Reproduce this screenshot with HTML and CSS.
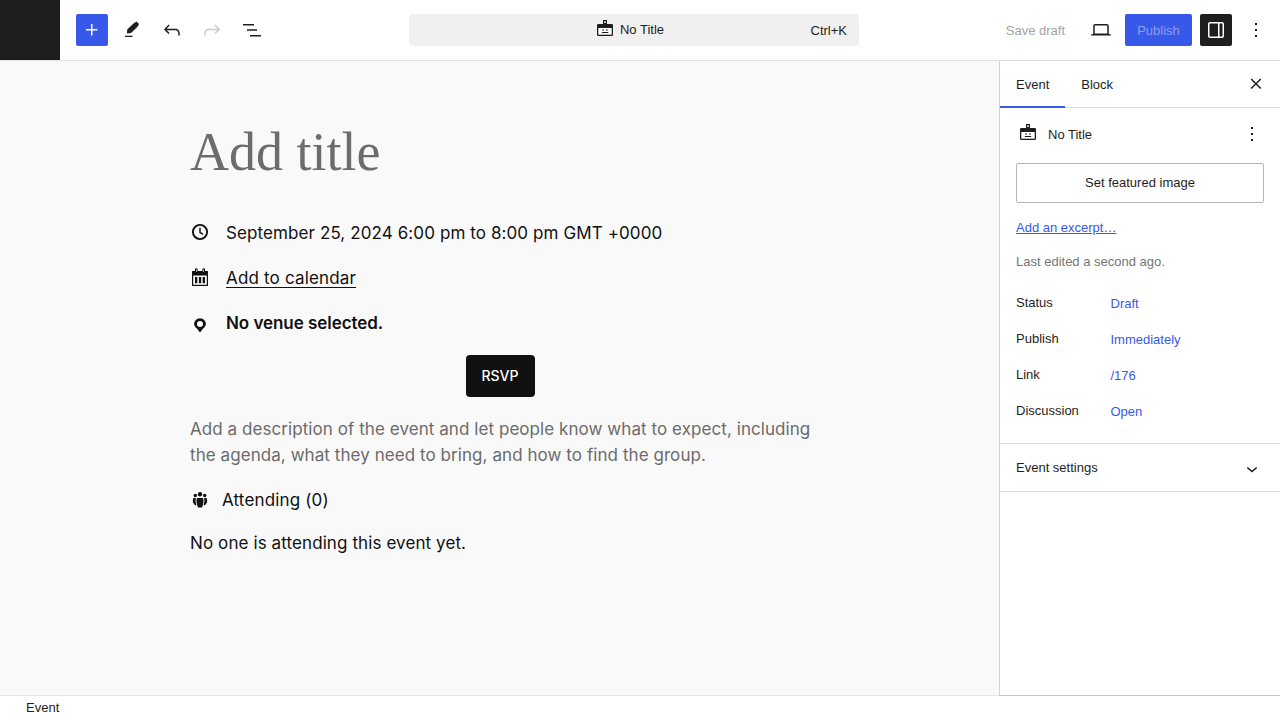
FILE: index.html
```html
<!DOCTYPE html>
<html>
<head>
    <title>No Title</title>
    <link rel="stylesheet" href="styles.css">
</head>
<body>
<div class="editor">
    <header class="topbar">
        <div class="site-logo"></div>
        <div class="tools">
            <button class="tool tool-add">
                <svg width="24" height="24" viewBox="0 0 24 24"><path d="M11 12.500V17.500H12.500V12.500H17.500V11H12.500V6H11V11H6V12.500H11Z" fill="#fff"/></svg>
            </button>
            <button class="tool">
                <svg width="24" height="24" viewBox="0 0 24 24"><path d="M7.200 11.500 13.500 5.400 16.500 3.600 19 6.100 17.300 9 11 15.100 7 15.600Z" fill="#1e1e1e"/><path d="M5 17.700h7.500v1.300H5z" fill="#1e1e1e"/></svg>
            </button>
            <button class="tool">
                <svg width="24" height="24" viewBox="0 0 24 24"><path d="M18.300 11.700c-.6-.6-1.400-.9-2.300-.9H6.700l2.900-3.300-1.100-1-4.500 5L8.500 16l1-1-2.700-2.700H16c.5 0 .9.2 1.300.5 1 1 1 3.400 1 4.500v.3h1.500v-.2c0-1.500 0-4.300-1.500-5.700z" fill="#1e1e1e"/></svg>
            </button>
            <button class="tool">
                <svg width="24" height="24" viewBox="0 0 24 24"><path d="M15.600 6.500l-1.100 1 2.900 3.300H8c-.9 0-1.700.3-2.300.9-1.400 1.500-1.400 4.200-1.400 5.600v.2h1.500v-.3c0-1.100 0-3.500 1-4.500.3-.3.7-.5 1.300-.5h9.200L14.500 15l1.100 1.100 4.600-4.600-4.600-5z" fill="#ccc"/></svg>
            </button>
            <button class="tool">
                <svg width="24" height="24" viewBox="0 0 24 24"><path d="M3 6h11v1.500H3zM7 11.300h10v1.500H7zM10 17h11v1.500H10z" fill="#1e1e1e"/></svg>
            </button>
        </div>
        <div class="command-wrap">
            <div class="command">
                <div class="command-title">
                    <svg width="24" height="24" viewBox="0 0 24 24"><use href="#icon-event"/></svg>
                    <span>No Title</span>
                </div>
                <span class="command-key">Ctrl+K</span>
            </div>
        </div>
        <div class="actions">
            <span class="save-draft">Save draft</span>
            <button class="tool">
                <svg width="24" height="24" viewBox="0 0 24 24"><path d="M20.500 16h-.7V8c0-1.100-.9-2-2-2H6.200c-1.100 0-2 .9-2 2v8h-.7c-.8 0-1.500.7-1.500 1.500h20c0-.8-.7-1.500-1.500-1.500zM5.700 8c0-.3.2-.5.5-.5h11.600c.3 0 .5.2.5.5v7.600H5.700V8z" fill="#1e1e1e"/></svg>
            </button>
            <button class="publish">Publish</button>
            <button class="tool tool-dark">
                <svg width="24" height="24" viewBox="0 0 24 24"><path d="M18 4H6c-1.100 0-2 .9-2 2v12c0 1.100.9 2 2 2h12c1.100 0 2-.9 2-2V6c0-1.100-.9-2-2-2zM5.500 18V6c0-.3.2-.5.5-.5h8v13H6c-.3 0-.5-.2-.5-.5zm13 0c0 .3-.2.5-.5.5h-2.500v-13H18c.3 0 .5.2.5.5v12z" fill="#fff"/></svg>
            </button>
            <button class="tool tool-more">
                <svg width="24" height="24" viewBox="0 0 24 24"><use href="#icon-dots"/></svg>
            </button>
        </div>
    </header>

    <div class="main">
        <main class="canvas">
            <div class="post">
                <h1 class="post-title">Add title</h1>
                <div class="meta-row meta-date">
                    <svg class="meta-icon" width="20" height="20" viewBox="0 0 20 20"><circle cx="10" cy="10" r="7.100" fill="none" stroke="#111" stroke-width="1.900"/><path d="M10 5.800V10.400L13 12.400" fill="none" stroke="#111" stroke-width="1.500"/></svg>
                    <span>September 25, 2024 6:00 pm to 8:00 pm GMT +0000</span>
                </div>
                <div class="meta-row meta-calendar">
                    <svg class="meta-icon" width="20" height="20" viewBox="0 0 20 20"><path d="M2 4h16v15H2z" fill="#111"/><path d="M3.200 8.500h13.600V17.800H3.200z" fill="#f9f9f9"/><path d="M5 10h2.300v6.300H5zM8.900 10h2.300v6.300H8.900zM12.700 10h2.300v6.300h-2.300z" fill="#111"/><path d="M5.500 5V1.800h1.600V5M12.900 5V1.800h1.600V5" fill="#f9f9f9" stroke="#111" stroke-width="1"/></svg>
                    <a class="calendar-link">Add to calendar</a>
                </div>
                <div class="meta-row meta-venue">
                    <svg class="meta-icon" width="20" height="20" viewBox="0 0 20 20"><path d="M10 19.500 7.300 16.100A5.800 5.800 0 1 1 12.700 16.100Z" fill="#111"/><circle cx="10" cy="11" r="3" fill="#f9f9f9"/></svg>
                    <strong>No venue selected.</strong>
                </div>
                <div class="rsvp-row"><button class="rsvp">RSVP</button></div>
                <p class="description">Add a description of the event and let people know what to expect, including the agenda, what they need to bring, and how to find the group.</p>
                <div class="attending">
                    <svg width="20" height="20" viewBox="0 0 20 20" fill="#111"><circle cx="10" cy="4.200" r="2.200"/><circle cx="5.300" cy="5.500" r="1.700"/><circle cx="14.700" cy="5.500" r="1.700"/><path d="M7 8h6c.9 2.500.5 6-1 9.500H8C6.500 14 6.100 10.500 7 8Z"/><path d="M3.500 8h2.400c-.6 2.300-.3 4.700.5 7.200H5L3 12.500c-.4-1.500-.2-3.200.5-4.500Z"/><path d="M16.500 8h-2.400c.6 2.300.3 4.700-.5 7.200H15l2-2.700c.4-1.500.2-3.200-.5-4.500Z"/></svg>
                    <span>Attending (0)</span>
                </div>
                <p class="no-attendees">No one is attending this event yet.</p>
            </div>
        </main>

        <aside class="sidebar">
            <div class="tabs">
                <div class="tab tab-active">Event</div>
                <div class="tab">Block</div>
                <button class="tabs-close">
                    <svg width="24" height="24" viewBox="0 0 24 24"><path d="M13 11.800l4.300-4.300-1.100-1.100-4.200 4.300-4.300-4.300-1.100 1.100 4.300 4.300-4.300 4.200 1.100 1.100 4.300-4.300 4.200 4.300 1.100-1.100z" fill="#1e1e1e"/></svg>
                </button>
            </div>
            <div class="panel">
                <div class="doc-row">
                    <svg class="doc-icon" width="24" height="24" viewBox="0 0 24 24"><use href="#icon-event"/></svg>
                    <span class="doc-name">No Title</span>
                    <svg class="doc-menu" width="24" height="24" viewBox="0 0 24 24"><use href="#icon-dots"/></svg>
                </div>
                <button class="featured">Set featured image</button>
                <a class="excerpt">Add an excerpt…</a>
                <p class="edited">Last edited a second ago.</p>
                <div class="summary">
                    <div class="summary-row"><span>Status</span><a>Draft</a></div>
                    <div class="summary-row"><span>Publish</span><a>Immediately</a></div>
                    <div class="summary-row"><span>Link</span><a>/176</a></div>
                    <div class="summary-row"><span>Discussion</span><a>Open</a></div>
                </div>
            </div>
            <div class="settings-row">
                <span>Event settings</span>
                <svg width="24" height="24" viewBox="0 0 24 24"><path d="M17.200 12 16.200 11 12 14.600 7.800 11 6.800 12l5.200 4.600z" fill="#1e1e1e"/></svg>
            </div>
        </aside>
    </div>

    <footer class="statusbar">Event</footer>
</div>

<svg class="icon-defs" width="0" height="0">
    <symbol id="icon-event" viewBox="0 0 24 24">
        <path d="M5.300 7h13.400c.7 0 1.300.6 1.300 1.300v9.400c0 .7-.6 1.300-1.300 1.300H5.300c-.7 0-1.300-.6-1.300-1.300V8.300C4 7.600 4.600 7 5.300 7z" fill="#1e1e1e"/>
        <path d="M5.300 11h13.400v6.700H5.300z" fill="#fff"/>
        <path d="M10 3h4v4.500h-4z" fill="#1e1e1e"/>
        <path d="M11.200 4.200h1.600v1.800h-1.600z" fill="#fff"/>
        <path d="M9.500 12.200h1.200v1.500H9.500zM13.300 12.200h1.200v1.500h-1.200zM8.800 15h6.400v1H8.800z" fill="#1e1e1e"/>
    </symbol>
    <symbol id="icon-dots" viewBox="0 0 24 24">
        <path d="M13 19h-2v-2h2v2zm0-6h-2v-2h2v2zm0-6h-2V5h2v2z" fill="#1e1e1e"/>
    </symbol>
</svg>
</body>
</html>
```

FILE: styles.css
```css
* {
    box-sizing: border-box;
}

html, body {
    margin: 0;
    height: 100%;
    overflow: hidden;
}

body {
    font-family: "Liberation Sans", sans-serif;
    font-size: 13px;
    color: #1e1e1e;
    background: #fff;
}

button {
    font-family: inherit;
    border: 0;
    padding: 0;
    background: none;
}

svg {
    display: block;
}

.icon-defs {
    position: absolute;
}

.editor {
    display: flex;
    flex-direction: column;
    height: 720px;
}

/* top bar */
.topbar {
    display: flex;
    align-items: center;
    height: 61px;
    flex: none;
    border-bottom: 1px solid #e0e0e0;
}

.site-logo {
    width: 60px;
    height: 60px;
    background: #1e1e1e;
}

.tools {
    display: flex;
    align-items: center;
    gap: 8px;
    margin-left: 16px;
}

.tool {
    display: flex;
    align-items: center;
    justify-content: center;
    width: 32px;
    height: 32px;
    border-radius: 2px;
}

.tool-add {
    background: #3858e9;
}

.tool-dark {
    background: #1e1e1e;
}

.tool-more {
    margin-left: 8px;
}

.command-wrap {
    position: absolute;
    left: 409px;
    top: 14px;
}

.command {
    position: relative;
    display: flex;
    align-items: center;
    justify-content: center;
    width: 450px;
    height: 32px;
    background: #f0f0f0;
    border-radius: 4px;
}

.command-title {
    display: flex;
    align-items: center;
    gap: 3px;
    margin-top: -2px;
    margin-left: -11px;
}

.command-key {
    position: absolute;
    right: 12px;
    top: 9px;
}

.actions {
    display: flex;
    align-items: center;
    margin-left: auto;
    margin-right: 8px;
}

.save-draft {
    color: #a2a2a2;
    margin-right: 20px;
}

.publish {
    width: 67px;
    height: 32px;
    margin-left: 8px;
    margin-right: 8px;
    background: #3858e9;
    color: #8a9ef2;
    font-size: 13px;
    border-radius: 2px;
}

/* editor canvas */
.main {
    display: flex;
    height: 635px;
    flex: none;
}

.canvas {
    flex: 1;
    background: #f9f9f9;
    border-bottom: 1px solid #e6e6e6;
}

.post {
    width: 620px;
    margin-left: 190px;
    font-family: Inter, sans-serif;
    font-optical-sizing: none;
    font-size: 17px;
    letter-spacing: 0.1px;
    color: #111;
}

.post-title {
    margin: 0;
    padding-top: 56px;
    height: 143px;
    font-family: "Liberation Serif", serif;
    font-size: 54px;
    font-weight: 400;
    letter-spacing: 0;
    line-height: 70px;
    color: #6c6c6c;
}

.meta-row {
    display: flex;
    align-items: center;
    gap: 16px;
    height: 28px;
}

.meta-row span,
.calendar-link {
    margin-top: 1px;
}

.meta-icon {
    flex: none;
}

.meta-date {
    margin-top: 14px;
}

.meta-calendar {
    margin-top: 17px;
}

.meta-venue {
    margin-top: 18px;
}

.meta-venue strong {
    margin-top: -1px;
    font-weight: 600;
    letter-spacing: -0.05px;
}

.calendar-link {
    letter-spacing: 0.17px;
    text-decoration: underline;
    text-underline-offset: 3px;
}

.rsvp-row {
    display: flex;
    justify-content: center;
    margin-top: 18px;
}

.rsvp {
    width: 69px;
    height: 42px;
    padding-bottom: 1px;
    background: #111;
    color: #fff;
    font-family: Inter, sans-serif;
    font-size: 14px;
    font-weight: 500;
    border-radius: 4px;
}

.description {
    width: 630px;
    margin: 19px 0 0;
    line-height: 26px;
    letter-spacing: 0.065px;
    color: #6b6b6b;
}

.attending {
    display: flex;
    align-items: center;
    gap: 12px;
    height: 28px;
    margin-top: 18px;
    letter-spacing: 0.15px;
}

.no-attendees {
    margin: 15px 0 0;
    line-height: 28px;
}

/* sidebar */
.sidebar {
    width: 281px;
    flex: none;
    background: #fff;
    border-left: 1px solid #d4d4d4;
    border-bottom: 1px solid #c4c4c4;
}

.tabs {
    display: flex;
    align-items: center;
    height: 47px;
    border-bottom: 1px solid #e0e0e0;
}

.tab {
    display: flex;
    align-items: center;
    height: 47px;
    padding: 0 16px;
}

.tab-active {
    box-shadow: inset 0 -2px 0 #3858e9;
}

.tabs-close {
    margin-left: auto;
    margin-right: 12px;
}

.panel {
    padding: 0 16px;
    height: 336px;
    border-bottom: 1px solid #e0e0e0;
}

.doc-row {
    display: flex;
    align-items: center;
    height: 52px;
    margin-bottom: 3px;
}

.doc-icon {
    margin-top: -2px;
}

.doc-name {
    margin-left: 8px;
}

.doc-menu {
    margin-left: auto;
}

.featured {
    display: block;
    width: 248px;
    height: 40px;
    padding-bottom: 2px;
    font-size: 13px;
    color: #1e1e1e;
    background: #fff;
    border: 1px solid #b5b5b5;
    border-radius: 2px;
}

.excerpt {
    display: block;
    margin-top: 16px;
    line-height: 18px;
    color: #3858e9;
    text-decoration: underline;
}

.edited {
    margin: 16px 0 0;
    line-height: 18px;
    color: #757575;
}

.summary {
    margin-top: 23px;
}

.summary-row {
    display: flex;
    height: 36px;
    line-height: 18px;
}

.summary-row span {
    width: 94.500px;
}

.summary-row a {
    margin-top: 1px;
    color: #3858e9;
}

.settings-row {
    display: flex;
    align-items: center;
    justify-content: space-between;
    height: 48px;
    padding: 0 16px;
    border-bottom: 1px solid #e0e0e0;
}

.statusbar {
    height: 25px;
    flex: none;
    padding: 3px 0 0 26px;
    line-height: 18px;
    background: #fff;
}
```
